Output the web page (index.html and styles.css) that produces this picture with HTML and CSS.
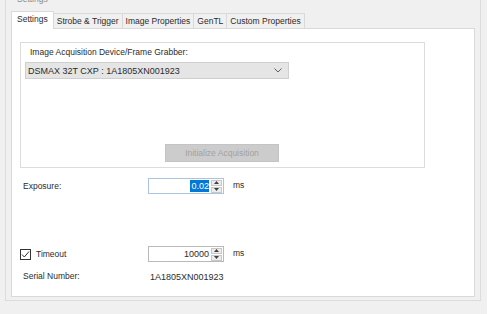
FILE: index.html
```html
<!DOCTYPE html>
<html lang="en">
  <head>
    <meta charset="UTF-8" />
    <title>Camera Settings</title>
    <link rel="stylesheet" href="styles.css">
  </head>
  <body>
    <div class="window">
      <fieldset class="group">
        <legend>Settings</legend>

        <div class="tabs">
          <div class="tab active">Settings</div>
          <div class="tab">Strobe &amp; Trigger</div>
          <div class="tab">Image Properties</div>
          <div class="tab">GenTL</div>
          <div class="tab">Custom Properties</div>
        </div>

        <div class="page">
          <div class="acq_panel">
            <div class="acq_label">Image Acquisition Device/Frame Grabber:</div>
            <div class="combo">
              <span>DSMAX 32T CXP : 1A1805XN001923</span>
              <svg class="chevron" width="8" height="5" viewBox="0 0 8 5">
                <polyline points="0.5,0.5 4,4 7.5,0.5" fill="none" stroke="#606060" stroke-width="1" />
              </svg>
            </div>
            <button class="init_btn" disabled>Initialize Acquisition</button>
          </div>

          <div class="row exposure_row">
            <span class="row_label">Exposure:</span>
            <div class="spin focused">
              <span class="spin_value"><span class="selected">0.02</span></span>
              <div class="spin_btns">
                <div class="spin_btn"><svg width="5" height="3" viewBox="0 0 5 3"><polygon points="0,3 2.5,0 5,3" fill="#404040" /></svg></div>
                <div class="spin_btn"><svg width="5" height="3" viewBox="0 0 5 3"><polygon points="0,0 2.5,3 5,0" fill="#404040" /></svg></div>
              </div>
            </div>
            <span class="unit">ms</span>
          </div>

          <div class="row timeout_row">
            <span class="row_label check_label">
              <svg class="checkbox" width="11" height="11" viewBox="0 0 11 11">
                <rect x="0.5" y="0.5" width="10" height="10" fill="#fff" stroke="#333" stroke-width="1" />
                <polyline points="2,5.5 4.3,8 9,2.5" fill="none" stroke="#333" stroke-width="1" />
              </svg>
              Timeout
            </span>
            <div class="spin">
              <span class="spin_value">10000</span>
              <div class="spin_btns">
                <div class="spin_btn"><svg width="5" height="3" viewBox="0 0 5 3"><polygon points="0,3 2.5,0 5,3" fill="#404040" /></svg></div>
                <div class="spin_btn"><svg width="5" height="3" viewBox="0 0 5 3"><polygon points="0,0 2.5,3 5,0" fill="#404040" /></svg></div>
              </div>
            </div>
            <span class="unit">ms</span>
          </div>

          <div class="row serial_row">
            <span class="row_label">Serial Number:</span>
            <span class="serial_value">1A1805XN001923</span>
          </div>
        </div>
      </fieldset>
    </div>
  </body>
</html>
```

FILE: styles.css
```css
body {
  margin: 0;
  background-color: #ffffff;
  font-family: "Liberation Sans", Arial, sans-serif;
  font-size: 8.5px;
  color: #2b2b2b;
  overflow: hidden;
}

.window {
  width: 487px;
  height: 314px;
  background-color: #f0f0f0;
  padding-left: 5px;
  box-sizing: border-box;
  overflow: hidden;
}

.group {
  box-sizing: border-box;
  width: 476px;
  height: 307px;
  margin: -6px 0 0 0;
  padding: 6px 4px 0 5px;
  border: 1px solid #dcdcdc;
}

.group legend {
  padding: 0 2px;
  margin-left: 4px;
  line-height: 11px;
  color: #8a8a8a;
}

/* tab strip */
.tabs {
  display: flex;
  align-items: flex-end;
  height: 17px;
}

.tab {
  height: 14px;
  line-height: 14px;
  padding: 0 3px;
  border: 1px solid #d9d9d9;
  border-bottom: none;
  border-left: none;
  background-color: #f0f0f0;
  white-space: nowrap;
}

.tab.active {
  height: 17px;
  line-height: 15px;
  padding: 0 5px;
  border-left: 1px solid #d9d9d9;
  background-color: #ffffff;
  margin-bottom: -1px;
  position: relative;
  z-index: 1;
}

.page {
  box-sizing: border-box;
  width: 464px;
  height: 269px;
  background-color: #ffffff;
  border: 1px solid #d9d9d9;
  padding: 13px 0 0 8px;
}

/* acquisition device panel */
.acq_panel {
  box-sizing: border-box;
  width: 405px;
  height: 126px;
  border: 1px solid #dcdcdc;
  padding: 4px 0 0 4px;
  display: flex;
  flex-direction: column;
  align-items: flex-start;
}

.acq_label {
  padding-left: 5px;
  line-height: 11px;
}

.combo {
  box-sizing: border-box;
  width: 264px;
  height: 17px;
  margin-top: 4px;
  background-color: #e5e5e5;
  border: 1px solid #cfcfcf;
  display: flex;
  align-items: center;
  justify-content: space-between;
  padding: 0 6px 0 2px;
  font-size: 9px;
}

.chevron {
  display: block;
}

.init_btn {
  box-sizing: border-box;
  width: 114px;
  height: 18px;
  margin: 65px 0 0 140px;
  padding: 0;
  background-color: #cccccc;
  border: 1px solid #c4c4c4;
  font-family: inherit;
  font-size: 8.5px;
  color: #a2a2a2;
}

/* value rows */
.row {
  display: flex;
  align-items: center;
  padding-left: 3px;
}

.row_label {
  width: 125px;
  line-height: 11px;
}

.exposure_row {
  margin-top: 10px;
}

.timeout_row {
  margin-top: 52px;
}

.serial_row {
  margin-top: 9px;
}

.check_label {
  display: flex;
  align-items: center;
  gap: 5px;
  margin-left: -3px;
  width: 128px;
}

.checkbox {
  display: block;
}

.spin {
  box-sizing: border-box;
  width: 76px;
  height: 16px;
  border: 1px solid #b9b9b9;
  background-color: #ffffff;
  display: flex;
  align-items: center;
  justify-content: flex-end;
  padding-right: 1px;
}

.spin.focused {
  border-color: #a9c4e2;
}

.spin_value {
  padding-right: 2px;
  font-size: 9px;
  line-height: 12px;
}

.selected {
  background-color: #0078d7;
  color: #ffffff;
  padding: 1px 0 1px 1px;
}

.spin_btns {
  display: flex;
  flex-direction: column;
  gap: 1px;
  height: 13px;
}

.spin_btn {
  box-sizing: border-box;
  width: 11px;
  height: 6px;
  background-color: #ececec;
  border: 1px solid #c8c8c8;
  display: flex;
  align-items: center;
  justify-content: center;
}

.spin_btn svg {
  display: block;
}

.unit {
  margin-left: 9px;
  margin-top: -3px;
}

.serial_value {
  margin-left: 2px;
  font-size: 9px;
}
```
